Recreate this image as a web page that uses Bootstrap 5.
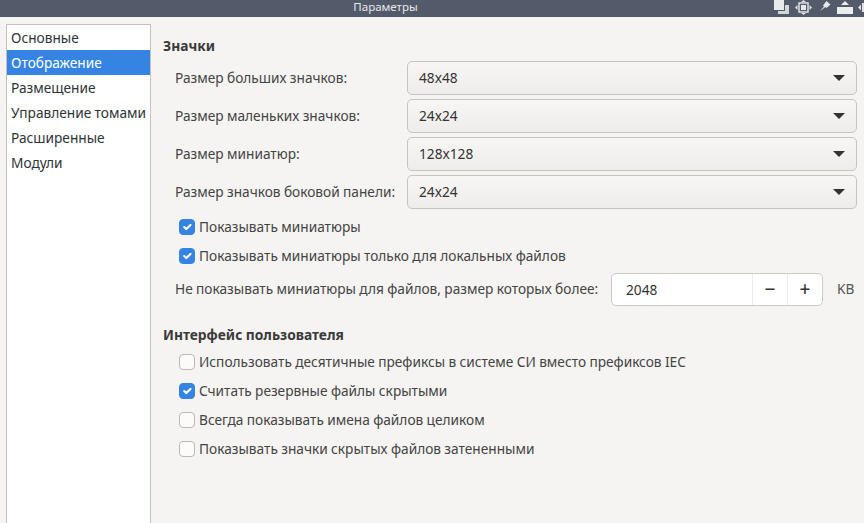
<!DOCTYPE html>
<html lang="ru">
<head>
<meta charset="utf-8">
<title>Параметры</title>
<link href="https://cdn.jsdelivr.net/npm/bootstrap@5.3.0/dist/css/bootstrap.min.css" rel="stylesheet">
<style>
html,body{height:100%;margin:0}
body{width:864px;height:523px;overflow:hidden;background:#f5f4f2;color:#3a3a3a;font-family:"Noto Sans",sans-serif;font-size:13.7px;word-spacing:-.2px;line-height:20px;display:flex;flex-direction:column}
.titlebar{height:17px;flex:none;background:#535b6b;color:#e6e8ea;font-size:11.5px;line-height:14px;position:relative;text-align:center;padding-right:93px}
.wm-icons{position:absolute;top:0;right:0;height:17px}
.shell{flex:1;min-height:0;display:flex;padding:7px 7px 0 6px}
.side{width:145px;flex:none;background:#fff;border:1px solid #c5c2bd;border-bottom:0;border-radius:0;display:block}
.side .list-group-item{border:0;border-radius:0;padding:0 0 0 4px;margin:0;height:25px;line-height:25px;color:#2e3436;font-size:13.7px;background:transparent;white-space:nowrap}
.side .list-group-item.active{background:#3584e4;color:#fff;margin-top:0}
.pane{flex:1;min-width:0;padding:12px 0 0 12px}
.sect{font-weight:700;color:#3a3a3a;font-size:13.8px;line-height:20px;margin:0 0 5px}
.rowline{height:34px;margin-bottom:4px;padding-left:12px;display:flex;align-items:center}
.rowline label{width:232px;flex:none;margin:0;color:#444;white-space:nowrap}
.rowline select.form-select{flex:1;height:34px;padding:0 30px 0 11px;font-size:13.7px;color:#333;border:1px solid #c8c4bd;border-radius:5px;background-color:#f1f0ee;background-image:url("data:image/svg+xml,%3Csvg xmlns='http://www.w3.org/2000/svg' width='12' height='6'%3E%3Cpath d='M0 0h12L6 6z' fill='%23333'/%3E%3C/svg%3E"),linear-gradient(#f7f6f5,#eeedeb);background-position:right 11px center,0 0;background-size:12px 6px,100% 100%;background-repeat:no-repeat;font-family:inherit;box-shadow:none}
.opt{display:flex;align-items:center;margin:0;padding:0 0 0 16px;min-height:0;color:#444}
.opt .form-check-input{float:none;width:16px;height:16px;margin:0 4px 0 0;border:1px solid #bcb8b2;border-radius:4px;background-color:#fbfbfa}
.opt .form-check-input:checked{background-color:#3584e4;border-color:#3584e4}
.opt .form-check-label{line-height:20px}
.optset1{display:flex;flex-direction:column;gap:9px;margin-top:8px}
.optset2{display:flex;flex-direction:column;gap:9px}
.spinline{display:flex;align-items:center;padding-left:12px;margin-top:6px;height:34px;margin-bottom:19px;color:#444}
.spinline .spin-lbl{width:436px;flex:none;white-space:nowrap}
.spinbox{width:212px;height:33px;flex:none;flex-wrap:nowrap;background:#fff;border:1px solid #cdc9c3;border-radius:5px}
.spinbox .form-control{border:0;height:31px;padding:0 0 0 14px;font-size:13.7px;color:#333;background:transparent;box-shadow:none;flex:1;min-width:0;font-family:inherit}
.spinbox .btn{width:35px;height:31px;padding:0;border:0;border-left:1px solid #ecebe9;border-radius:0;color:#333;font-size:19px;font-weight:500;line-height:28px;background:transparent;margin:0!important}
.unit{margin-left:14px;color:#555}
.sect2{margin-bottom:7px}
</style>
</head>
<body>
<header class="titlebar">
  <span>Параметры</span>
  <svg class="wm-icons" width="92" height="17" viewBox="772 0 92 17" aria-hidden="true">
    <rect x="774" y="0" width="10" height="10" fill="#e8e9ea"/>
    <path d="M785 5h4v9h-11v-3h7z" fill="#d4d6d8"/>
    <path d="M799 3h9v9h-9z" fill="none" stroke="#dfe1e3" stroke-width="1.500"/><rect x="801" y="5" width="5" height="5" fill="#e8e9ea"/>
    <path d="M803.500 0l2.500 2h-5zM803.500 15l2.500-2h-5zM795 7.500l2.500-2.500v5zM812 7.500l-2.500-2.500v5z" fill="#e0e2e4"/>
    <path d="M820 11l4-4.500-1-1 3.500-4.500 4 3.500-4 3.500-1-1z" fill="#e6e7e8"/>
    <path d="M837 14V7h16v7z" fill="#eceded"/><path d="M845 1l4 4h-8z" fill="#eceded"/>
    <path d="M858 7.500l3-3v6z" fill="#dfe1e3"/><path d="M862 3h2v9h-2z" fill="#dfe1e3"/>
  </svg>
</header>
<div class="shell">
  <nav class="side list-group">
    <a class="list-group-item" href="#">Основные</a>
    <a class="list-group-item active" href="#">Отображение</a>
    <a class="list-group-item" href="#">Размещение</a>
    <a class="list-group-item" href="#">Управление томами</a>
    <a class="list-group-item" href="#">Расширенные</a>
    <a class="list-group-item" href="#">Модули</a>
  </nav>
  <main class="pane">
    <h6 class="sect">Значки</h6>
    <div class="rowline"><label>Размер больших значков:</label><select class="form-select"><option>48x48</option></select></div>
    <div class="rowline"><label>Размер маленьких значков:</label><select class="form-select"><option>24x24</option></select></div>
    <div class="rowline"><label>Размер миниатюр:</label><select class="form-select"><option>128x128</option></select></div>
    <div class="rowline"><label>Размер значков боковой панели:</label><select class="form-select"><option>24x24</option></select></div>
    <div class="optset1">
      <div class="form-check opt"><input class="form-check-input" type="checkbox" checked id="c1"><label class="form-check-label" for="c1">Показывать миниатюры</label></div>
      <div class="form-check opt"><input class="form-check-input" type="checkbox" checked id="c2"><label class="form-check-label" for="c2">Показывать миниатюры только для локальных файлов</label></div>
    </div>
    <div class="spinline">
      <span class="spin-lbl">Не показывать миниатюры для файлов, размер которых более:</span>
      <div class="input-group spinbox"><input class="form-control" type="text" value="2048"><button class="btn" type="button">−</button><button class="btn" type="button">+</button></div>
      <span class="unit">KB</span>
    </div>
    <h6 class="sect sect2">Интерфейс пользователя</h6>
    <div class="optset2">
      <div class="form-check opt"><input class="form-check-input" type="checkbox" id="c3"><label class="form-check-label" for="c3">Использовать десятичные префиксы в системе СИ вместо префиксов IEC</label></div>
      <div class="form-check opt"><input class="form-check-input" type="checkbox" checked id="c4"><label class="form-check-label" for="c4">Считать резервные файлы скрытыми</label></div>
      <div class="form-check opt"><input class="form-check-input" type="checkbox" id="c5"><label class="form-check-label" for="c5">Всегда показывать имена файлов целиком</label></div>
      <div class="form-check opt"><input class="form-check-input" type="checkbox" id="c6"><label class="form-check-label" for="c6">Показывать значки скрытых файлов затененными</label></div>
    </div>
  </main>
</div>
<script src="https://cdn.jsdelivr.net/npm/bootstrap@5.3.0/dist/js/bootstrap.bundle.min.js"></script>
</body>
</html>
